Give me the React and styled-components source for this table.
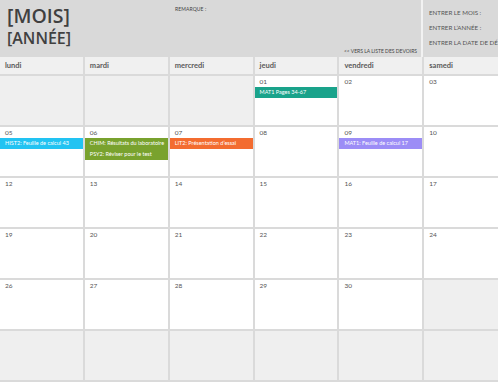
import React from 'react';
import styled, { createGlobalStyle } from 'styled-components';

const GlobalStyle = createGlobalStyle`
  html, body {
    margin: 0;
    padding: 0;
    width: 498px;
    height: 382px;
    overflow: hidden;
    background: #dadada;
  }
  body {
    font-family: Lato, "Open Sans", "Liberation Sans", sans-serif;
  }
`;

const days = ['lundi', 'mardi', 'mercredi', 'jeudi', 'vendredi', 'samedi', 'dimanche'];

const colors = {
  teal: '#1aa38b',
  blue: '#22c3f2',
  green: '#79a22e',
  orange: '#f36c30',
  purple: '#9c8df6',
};

const weeks = [
  [
    { out: true }, { out: true }, { out: true },
    { n: '01', events: [{ text: 'MAT1 Pages 34-67', color: 'teal' }] },
    { n: '02' }, { n: '03' }, { n: '04' },
  ],
  [
    { n: '05', events: [{ text: 'HIST2: Feuille de calcul 43', color: 'blue' }] },
    {
      n: '06',
      events: [
        { text: 'CHIM: Résultats du laboratoire', color: 'green' },
        { text: 'PSY2: Réviser pour le test', color: 'green' },
      ],
    },
    { n: '07', events: [{ text: 'LIT2: Présentation d\u2019essai', color: 'orange' }] },
    { n: '08' },
    { n: '09', events: [{ text: 'MAT1: Feuille de calcul 17', color: 'purple' }] },
    { n: '10' }, { n: '11' },
  ],
  [{ n: '12' }, { n: '13' }, { n: '14' }, { n: '15' }, { n: '16' }, { n: '17' }, { n: '18' }],
  [{ n: '19' }, { n: '20' }, { n: '21' }, { n: '22' }, { n: '23' }, { n: '24' }, { n: '25' }],
  [{ n: '26' }, { n: '27' }, { n: '28' }, { n: '29' }, { n: '30' }, { out: true }, { out: true }],
  [{ out: true }, { out: true }, { out: true }, { out: true }, { out: true }, { out: true }, { out: true }],
];

const App = () => {
  return (
    <>
      <GlobalStyle />
      <Page>
        <TopBar>
          <TitleArea>
            <Titles>
              <Month>[MOIS]</Month>
              <Year>[ANNÉE]</Year>
            </Titles>
            <Remark>REMARQUE :</Remark>
            <BackLink>&lt;&lt; VERS LA LISTE DES DEVOIRS</BackLink>
          </TitleArea>
          <Divider />
          <Settings>
            <SettingLabel>ENTRER LE MOIS :</SettingLabel>
            <SettingLabel>ENTRER L’ANNÉE :</SettingLabel>
            <SettingLabel>ENTRER LA DATE DE DÉBUT :</SettingLabel>
          </Settings>
        </TopBar>

        <Calendar>
          {days.map(d => (
            <DayName key={d}>{d}</DayName>
          ))}
          {weeks.flat().map((cell, i) => (
            <Cell key={i} $out={cell.out}>
              {cell.n && <DayNumber>{cell.n}</DayNumber>}
              {cell.events && cell.events.map((ev, j) => (
                <Event key={j} $color={colors[ev.color]}>{ev.text}</Event>
              ))}
            </Cell>
          ))}
        </Calendar>
      </Page>
    </>
  );
};

const Page = styled.div`
  width: 592px;
  background: #dadada;
`;

const TopBar = styled.div`
  display: flex;
  height: 57px;
  background: #d9d9d9;
`;

const TitleArea = styled.div`
  position: relative;
  width: 421px;
  display: flex;
  padding: 3px 0 0 7px;
  box-sizing: border-box;
`;

const Titles = styled.div`
  display: flex;
  flex-direction: column;
  width: 168px;
  font-family: "Open Sans", "Noto Sans", sans-serif;
  font-weight: 600;
  color: #404040;
`;

const Month = styled.div`
  font-size: 19.5px;
  line-height: 25px;
`;

const Year = styled.div`
  font-size: 16px;
  line-height: 20px;
`;

const Remark = styled.div`
  font-size: 5px;
  color: #444;
  padding-top: 3px;
  letter-spacing: 0.1px;
`;

const BackLink = styled.div`
  position: absolute;
  right: 4px;
  bottom: 3px;
  font-size: 5px;
  color: #444;
`;

const Divider = styled.div`
  width: 2px;
  background: #f2f2f2;
`;

const Settings = styled.div`
  flex: 1;
  display: flex;
  flex-direction: column;
  gap: 8px;
  padding: 9px 0 0 6px;
  white-space: nowrap;
  overflow: hidden;
`;

const SettingLabel = styled.div`
  font-size: 6.2px;
  line-height: 7px;
  color: #555;
`;

const Calendar = styled.div`
  display: grid;
  grid-template-columns: repeat(7, 1fr);
  grid-template-rows: 17px repeat(6, 49px);
  gap: 2px;
  background: #dadada;
`;

const DayName = styled.div`
  display: flex;
  align-items: center;
  padding-left: 5px;
  background: #f0f0f0;
  font-size: 7.5px;
  font-weight: 700;
  color: #5a5a5a;
`;

const Cell = styled.div`
  display: flex;
  flex-direction: column;
  background: ${({ $out }) => ($out ? '#efefef' : '#ffffff')};
`;

const DayNumber = styled.div`
  padding: 2px 0 0 5px;
  height: 9px;
  font-size: 6.5px;
  line-height: 8px;
  color: #555;
`;

const Event = styled.div`
  height: 11px;
  line-height: 11px;
  padding-left: 5px;
  background: ${({ $color }) => $color};
  color: #fff;
  font-size: 5.5px;
  white-space: nowrap;
  overflow: hidden;
`;

export default App;
